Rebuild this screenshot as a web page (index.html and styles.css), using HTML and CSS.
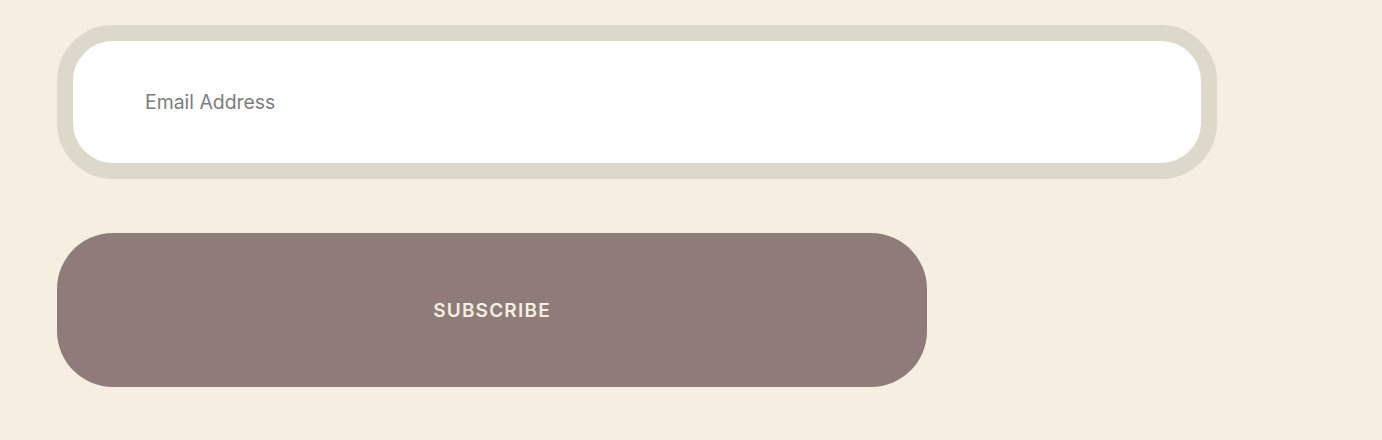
FILE: index.html
```html
<!DOCTYPE html>
<html lang="en">
<head>
<meta charset="utf-8">
<title>Subscribe</title>
<link rel="stylesheet" href="styles.css">
</head>
<body>
<form class="subscribe">
  <div class="field">
    <input class="email" type="email" placeholder="Email Address">
  </div>
  <button class="btn" type="button">SUBSCRIBE</button>
</form>
</body>
</html>
```
FILE: styles.css
```css
html, body {
  margin: 0;
  background: #f5eee1;
}
body {
  padding: 25px 57px;
  font-family: Inter, "Liberation Sans", sans-serif;
}
.subscribe {
  width: 1160px;
  display: flex;
  flex-direction: column;
  gap: 54px;
}
.field {
  box-sizing: border-box;
  height: 154px;
  border: 16px solid #dcd8ca;
  border-radius: 56px;
  background: #ffffff;
  display: flex;
  align-items: center;
  overflow: hidden;
}
.email {
  flex: 1;
  border: 0;
  outline: none;
  background: transparent;
  font-family: Inter, "Liberation Sans", sans-serif;
  font-size: 19.4px;
  color: #333;
  padding: 0 0 0 72px;
  height: 100%;
}
.email::placeholder {
  color: #7d7d7d;
}
.btn {
  box-sizing: border-box;
  width: 870px;
  height: 154px;
  border: 0;
  border-radius: 56px;
  background: #8f7c7a;
  color: #f5eee1;
  font-family: Inter, "Liberation Sans", sans-serif;
  font-size: 19px;
  font-weight: 600;
  letter-spacing: 1.2px;
  cursor: pointer;
}
```
